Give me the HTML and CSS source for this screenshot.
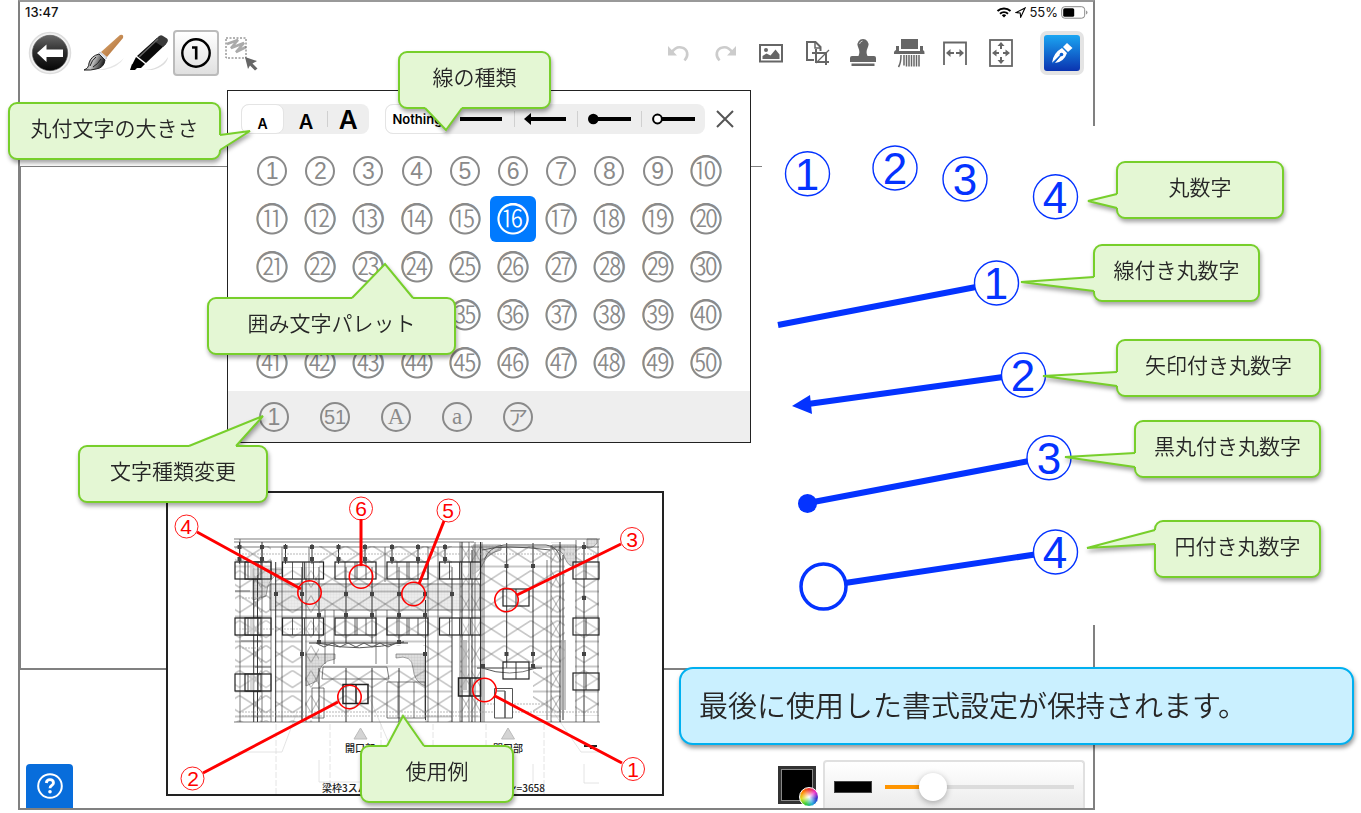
FILE: index.html
```html
<!DOCTYPE html>
<html lang="ja">
<head>
<meta charset="utf-8">
<meta name="viewport" content="width=device-width, initial-scale=1">
<title>丸付文字の使い方</title>
<link rel="stylesheet" href="styles.css">
</head>
<body>
<main class="stage">
  <section class="app" aria-label="アプリ画面">
    <header class="status">
      <span>13:47</span>
      <span class="status-right">
        <svg width="16" height="12" viewBox="0 0 16 12" fill="none" stroke="#000" stroke-width="2"><path d="M1.500 5a9.500 9.500 0 0 1 13 0M4 7.700a6 6 0 0 1 8 0"/><path d="M8 11.500L5.800 9.300a3.200 3.200 0 0 1 4.400 0z" fill="#000" stroke="none"/></svg>
        <svg width="11" height="11" viewBox="0 0 11 11" fill="none" stroke="#000" stroke-width="1.100"><path d="M10 1L1 5.600l4.200.4.500 4.200z"/></svg>
        <span class="percent">55%</span>
        <svg width="27" height="13" viewBox="0 0 27 13"><rect x=".7" y=".7" width="23" height="11.500" rx="3" fill="none" stroke="#888"/><rect x="2.200" y="2.200" width="11" height="8.500" rx="1.500"/><path d="M25 4.500v4q1.500-.5 1.500-2t-1.500-2z" fill="#999"/></svg>
      </span>
    </header>

    <nav class="toolbar" aria-label="ツール">
      <button class="back" aria-label="戻る">
        <svg width="44" height="44" viewBox="0 0 44 44"><defs><linearGradient id="bk" x2="0" y2="1"><stop stop-color="#666"/><stop offset=".5" stop-color="#2a2a2a"/><stop offset="1" stop-color="#050505"/></linearGradient></defs><circle cx="22" cy="22" r="20.500" fill="#f2f2f2" stroke="#ddd" stroke-width="1.500"/><circle cx="22" cy="22" r="17.700" fill="url(#bk)" stroke="#555" stroke-width=".6"/><path d="M9 22l9.500-8.500v5H35v7.500H18.500v5z" fill="#fff"/></svg>
      </button>
      <button aria-label="筆">
        <svg width="44" height="40" viewBox="0 0 44 40"><defs><linearGradient id="wd" x2="1" y2="1"><stop stop-color="#e0b27a"/><stop offset="1" stop-color="#a9622a"/></linearGradient><linearGradient id="br" x2="1" y2=".3"><stop stop-color="#555"/><stop offset=".5" stop-color="#ccc"/><stop offset="1" stop-color="#222"/></linearGradient></defs><path d="M10 37q20 0 32-12q-5 9-20 12z" fill="#e6e6e6"/><path d="M38 2q4-1 3 3L25 24l-6-5z" fill="url(#wd)"/><path d="M18 19l7 6-3 2-6-5z" fill="#dde3ea" stroke="#99a" stroke-width=".5"/><path d="M17 21l6 6q-1 8-9 9-5 1.500-12 1 5-2 5-7 2-7 10-9z" fill="url(#br)" stroke="#222"/><path d="M14 24q-4 3-6 9M19 26q-3 5-8 8" stroke="#222" fill="none"/></svg>
      </button>
      <button aria-label="マーカー">
        <svg width="44" height="40" viewBox="0 0 44 40"><path d="M14 37q18 0 26-13-1 9-16 13z" fill="#ddd"/><path d="M29 5l9 6L18 30l-9-7z" fill="#0a0a0a"/><path d="M29 5q3-4 6-2l4 2.500q2 2-.5 5L35 14l-9-6z" fill="#3a3a3a"/><path d="M8 24l9 7-4 4H8l-4-3z"/><path d="M30 6L11 24" stroke="#666" stroke-width="1.500"/><path d="M4 31l5 4-2 2H2z"/></svg>
      </button>
      <button class="tool-active" aria-label="丸付文字" aria-pressed="true">
        <svg width="34" height="34" viewBox="0 0 34 34" fill="none" stroke="#000"><circle cx="17" cy="17" r="13.700" stroke-width="2.400"/><path d="M13 11.500h4.200v12" stroke-width="2.600"/></svg>
      </button>
      <button aria-label="範囲選択">
        <svg width="36" height="38" viewBox="0 0 36 38"><path d="M3 10l11-4-7 8 13-5-8 9 10-5" fill="none" stroke="#aaa" stroke-width="2.600"/><rect x="2" y="4" width="20" height="20" fill="none" stroke="#666" stroke-dasharray="2 1.500"/><path d="M21 23l12 4-4.500 2.500 5 5-2.500 2-5-5-2 3.500z" fill="#666"/></svg>
      </button>
      <span class="spacer"></span>
      <button aria-label="元に戻す" disabled>
        <svg width="24" height="20" viewBox="0 0 24 20"><path d="M4.500 9.500Q9 3 14.500 4.500c6.500 1.500 7.500 8 3 13" fill="none" stroke="#ccc" stroke-width="2.600"/><path d="M1 3v9.500h9z" fill="#ccc"/></svg>
      </button>
      <button aria-label="やり直す" disabled>
        <svg width="24" height="20" viewBox="0 0 24 20"><path d="M19.500 9.500Q15 3 9.500 4.500C3 6 2 12.500 6.500 17.500" fill="none" stroke="#ccc" stroke-width="2.600"/><path d="M23 3v9.500h-9z" fill="#ccc"/></svg>
      </button>
      <button aria-label="画像">
        <svg width="26" height="20" viewBox="0 0 26 20"><rect x="2" y="2" width="22" height="16.500" fill="#fff" stroke="#666" stroke-width="2"/><circle cx="8" cy="7" r="2" fill="#666"/><path d="M4.500 16v-3l4-2.500 4 2 5-6 4 5v4.500z" fill="#666"/></svg>
      </button>
      <button aria-label="切り抜き">
        <svg width="26" height="28" viewBox="0 0 26 28" fill="none" stroke="#666"><path d="M10 21H3V3h8.500l5 5v4" stroke-width="2"/><path d="M11 3v6h6" stroke-width="1.500"/><path d="M12 10v13h13M8 14h14v12" stroke-width="2"/><path d="M12 24L25 11" stroke-width="1.200"/></svg>
      </button>
      <button aria-label="スタンプ">
        <svg width="28" height="30" viewBox="0 0 28 30" fill="#666"><path d="M14 1a5.500 5.500 0 0 1 5.300 7c-1.500 4-2.500 6-.8 10H25q2 0 2 2v4H1v-4q0-2 2-2h6.500c1.700-4 .7-6-.8-10A5.500 5.500 0 0 1 14 1zM2.500 25.500h23V28h-23z"/><path d="M10.500 6q.5-2.500 3-3" fill="none" stroke="#ccc"/></svg>
      </button>
      <button aria-label="シュレッダー">
        <svg width="32" height="30" viewBox="0 0 32 30" fill="#666"><path d="M8 1h17v10H8z"/><path d="M3 8h3v5h21V8h3v4q2 1 1.500 4H1q-.5-3 2-4z"/><path d="M8 17q0 8-2.500 12M11 17v10.500M13.500 17v11.500M16 17v11.500M18.500 17v11.500M21 17v11.500M23.500 17v11.500M26 17v11.500" fill="none" stroke="#666" stroke-width="1.500"/></svg>
      </button>
      <button aria-label="幅に合わせる">
        <svg width="26" height="26" viewBox="0 0 26 26"><path d="M2 25V2.500h22V25" fill="none" stroke="#666" stroke-width="1.800"/><path d="M4 13l4.500-4v3H12v2H8.500v3zM22 13l-4.500-4v3H14v2h3.500v3z" fill="#666"/></svg>
      </button>
      <button aria-label="全体表示">
        <svg width="26" height="30" viewBox="0 0 26 30"><rect x="2" y="2" width="22" height="26" fill="none" stroke="#666" stroke-width="1.800"/><path d="M4 15l4.500-3.500v2.500H11v2H8.500v2.500zM22 15l-4.500-3.500v2.500H15v2h2.500v2.500zM13 4l3.500 4H14v3h-2V8H9.500zM13 26l3.500-4H14v-3h-2v3H9.500z" fill="#666"/></svg>
      </button>
      <button class="pen" aria-label="ペン">
        <svg width="26" height="26" viewBox="0 0 26 26"><path d="M3 23Q4 13 13 8l5 5Q15 22 6 23l6-7.500" fill="#fff"/><path d="M3.500 23.500L12 15" stroke="#0a5fd0" stroke-width="1.400"/><circle cx="12.500" cy="14.500" r="1.800" fill="#0a5fd0"/><path d="M14 7l4-4 5.500 5-4.500 4z" fill="#fff"/></svg>
      </button>
    </nav>

    <div class="canvas"></div>

    <footer class="footer">
      <button class="help" aria-label="ヘルプ">
        <svg width="28" height="28" viewBox="0 0 28 28" fill="none" stroke="#fff"><circle cx="14" cy="14" r="11.800" stroke-width="2"/><path d="M10.300 11q.3-3.300 3.700-3.300T17.500 11c0 2.500-3.500 2.500-3.500 5.200" stroke-width="2.800"/><circle cx="14" cy="19.800" r="1.800" fill="#fff" stroke="none"/></svg>
      </button>
      <div class="footer-right">
        <button class="swatch" aria-label="色"><span class="wheel"></span></button>
        <label class="width-panel"><span class="line-preview"></span><input type="range" min="0" max="100" value="21" aria-label="線の太さ"></label>
      </div>
    </footer>
  </section>

  <section class="samples" aria-label="丸数字の例">
    <svg viewBox="762 126 338 499" width="338" height="499">
      <rect x="762" y="126" width="338" height="499" fill="#fff"/>
      <g class="blue-line">
        <path d="M778 325L976 287M808 404L1003 377M808 503L1029 461M845 583L1035 554.500"/>
      </g>
      <path d="M792 406l18-11 2 19z" fill="#0433ff"/>
      <circle cx="807.500" cy="503.500" r="9.500" fill="#0433ff"/>
      <circle cx="823.500" cy="586.500" r="22.500" fill="#fff" stroke="#0433ff" stroke-width="3.500"/>
      <g class="blue-ring">
        <circle cx="807.500" cy="173.700" r="22"/><circle cx="895" cy="168" r="22"/><circle cx="965" cy="179" r="22"/><circle cx="1055.500" cy="196.700" r="22"/><circle cx="996.500" cy="283" r="22"/><circle cx="1023.500" cy="375" r="22"/><circle cx="1049" cy="457.700" r="22"/><circle cx="1055.500" cy="552" r="22"/>
      </g>
      <g class="blue-digit">
        <text x="807" y="190">1</text><text x="895" y="184">2</text><text x="965" y="195">3</text><text x="1055" y="213">4</text><text x="996" y="299">1</text><text x="1023" y="391">2</text><text x="1049" y="474">3</text><text x="1055" y="568">4</text>
      </g>
    </svg>
  </section>

  <section class="palette" aria-label="囲み文字パレット">
    <div class="palette-head">
      <div class="seg sizes" role="group" aria-label="文字の大きさ">
        <button class="seg-on a-small">A</button><button class="a-mid">A</button><button class="a-big">A</button>
      </div>
      <div class="seg lines" role="group" aria-label="線の種類">
        <button class="seg-on nothing">Nothing</button>
        <button aria-label="線"><svg width="44" height="14" viewBox="0 0 44 14"><path d="M0 7h42" stroke="#000" stroke-width="4"/></svg></button>
        <button aria-label="矢印"><svg width="44" height="14" viewBox="0 0 44 14"><path d="M5 7h37" stroke="#000" stroke-width="4"/><path d="M0 7l7-6v12z"/></svg></button>
        <button aria-label="黒丸"><svg width="44" height="14" viewBox="0 0 44 14"><path d="M5 7h38" stroke="#000" stroke-width="4"/><circle cx="5.300" cy="7" r="5.300"/></svg></button>
        <button aria-label="円"><svg width="44" height="14" viewBox="0 0 44 14"><path d="M9 7h34" stroke="#000" stroke-width="4"/><circle cx="5.500" cy="7" r="4.400" fill="#fff" stroke="#000" stroke-width="2"/></svg></button>
      </div>
      <button class="close" aria-label="閉じる"><svg width="20" height="20" viewBox="0 0 20 20"><path d="M2 2l16 16M18 2L2 18" stroke="#555" stroke-width="2"/></svg></button>
    </div>
    <div class="grid">
      <button><i>1</i></button><button><i>2</i></button><button><i>3</i></button><button><i>4</i></button><button><i>5</i></button><button><i>6</i></button><button><i>7</i></button><button><i>8</i></button><button><i>9</i></button><button class="g">⑩</button>
      <button class="g">⑪</button><button class="g">⑫</button><button class="g">⑬</button><button class="g">⑭</button><button class="g">⑮</button><button class="g chosen">⑯</button><button class="g">⑰</button><button class="g">⑱</button><button class="g">⑲</button><button class="g">⑳</button>
      <button class="g">㉑</button><button class="g">㉒</button><button class="g">㉓</button><button class="g">㉔</button><button class="g">㉕</button><button class="g">㉖</button><button class="g">㉗</button><button class="g">㉘</button><button class="g">㉙</button><button class="g">㉚</button>
      <button aria-label="31"></button><button aria-label="32"></button><button aria-label="33"></button><button aria-label="34"></button><button class="g">㉟</button><button class="g">㊱</button><button class="g">㊲</button><button class="g">㊳</button><button class="g">㊴</button><button class="g">㊵</button>
      <button class="g">㊶</button><button class="g">㊷</button><button class="g">㊸</button><button class="g">㊹</button><button class="g">㊺</button><button class="g">㊻</button><button class="g">㊼</button><button class="g">㊽</button><button class="g">㊾</button><button class="g">㊿</button>
    </div>
    <div class="kinds">
      <button><i>1</i></button><button><i class="n">51</i></button><button><i class="serif">A</i></button><button><i class="serif">a</i></button><button><i class="kana">ア</i></button>
    </div>
  </section>

  <figure class="example" aria-label="使用例の図面">
    <svg viewBox="168 493 494 301" width="494" height="301">
      <defs>
        <pattern id="brace" x="319" y="545.500" width="26.500" height="25" patternUnits="userSpaceOnUse"><path d="M0 0L26.500 17M26.500 0L0 17M0 21H26.500" fill="none" stroke="#222" stroke-width=".5"/></pattern>
        <pattern id="thin" x="271" y="545.500" width="10" height="25" patternUnits="userSpaceOnUse"><path d="M0 0L10 17M10 0L0 17M0 21H10" fill="none" stroke="#555" stroke-width=".5"/></pattern>
        <pattern id="mesh" width="3" height="3" patternUnits="userSpaceOnUse"><rect width="3" height="3" fill="#ddd"/><path d="M0 0H3M0 0V3" stroke="#bbb" stroke-width=".5"/></pattern>
        <g id="win"><rect width="41" height="17" fill="#fff" fill-opacity=".2" stroke="#222" stroke-width="1.200"/><path d="M10 0v17M20 0v17M22 0v17M31 0v17" stroke="#333" stroke-width=".8"/></g>
        <g id="half"><rect width="26" height="17" fill="#fff" fill-opacity=".2" stroke="#222" stroke-width="1.200"/><path d="M13 0v17" stroke="#333"/></g>
      </defs>
      <g fill="none" stroke="#ddd" stroke-width=".8"><path d="M276 724v70M330 724v70M381 724v70M433 724v70M486 724v70M544 724v70" stroke-dasharray="6 2"/><path d="M238 752h44l15-40M366 690l26 60M545 700l36 52h18M319 760v22h60M533 764v19M584 764v19h15"/></g>
      <path d="M270 584h210v26H270z" fill="url(#mesh)" fill-opacity=".6" stroke="#777"/>
      <path d="M253 569h29v4q-14 2-16 23l-13 4zM306 654h29v5q-17 2-18 22l-11 5zM396 654h29v32q-11-4-12-18t-17-10zM473 545h28v5q-13 3-17 12t-11 12zM552 545h24v22q-8 0-11-9t-13-9zM587 539h10v4q-3 5-10 5z" fill="url(#mesh)" stroke="#777" stroke-width=".7"/>
      <path d="M235 546h36v176h-36zM275 567h27v155h-27zM319 546h53v100h-53zM372 546h53v100h-53zM425 546h27v176h-27zM319 664h106v50H319zM481 546h84v117h-84zM533 664h27v52h-27zM575 546h24v170h-24z" fill="url(#brace)"/>
      <path d="M253 567h9v155h-9zM305 567h14v155h-14zM460 542h9v180h-9zM471 542h10v180h-10zM551 542h10v180h-10z" fill="url(#thin)"/>
      <g fill="none" stroke="#444" stroke-width=".7">
        <path d="M234 539h366M234 542h240M234 547h365M234 722h366M240 539v183M262 547v175M271 560v162M282 547v175M302 567v155M306 567v155M325 610v54M334 610v54M376 610v54M387 610v54M428 547v175M438 547v175M460 542v180M469 542v180M482 542v180M484 560v162M547 560v160M551 545v177M576 540v182M598 539v183M309 547v35M385 547v35M475 542v180"/>
        <path d="M323 667h64l2 12h-67zM312 688h12v30h-12zM387 682h38v36h-38zM398 682v36M414 682v36M250 591h-15M261 641h-20M271 667h-16M261 691h-15"/>
      </g>
      <g fill="none" stroke="#333">
        <path d="M239.500 542v22M253.700 568v154M257.500 575v147M262 542v25M275.700 562v160M285.500 544v20M302 567v155M312 544v20M319 567v76M338.500 544v20M346 567v76M365 544v20M372 567v76M392 544v20M399 567v76M418 544v20M445 544v20M425.500 600v120M319 668v54M346 668v54M372 668v54M399 668v54M452 567v155M462 542v180M480.500 542v180M506.700 543v125M533 543v125M560 542v180M563 555v165M584 542v180M472 550v172"/>
        <path d="M309 643h99M477 668h65"/>
      </g>
      <path d="M318 643q40 10 86-1l-8 1-8 4-8-4-8 4-8-4-8 4-8-4-8 4-8-4-8 4-8-4M482 668q28 10 54 0M482 550q22-6 68 0M484 560q6-14 20-15h42q12 1 15 15" fill="none" stroke="#555"/>
      <path d="M239 648h21M239 598h21M239 712h360M239 629h87M239 554h355M484 704h60M239 716h240" fill="none" stroke="#999" stroke-width=".7" stroke-dasharray="2 1"/>
      <g fill="#444"><path d="M237.500 545h4v4h-4zM237.500 557h4v4h-4zM260 545h4v4h-4zM260 557h4v4h-4zM283.500 545h4v4h-4zM283.500 557h4v4h-4zM310 545h4v4h-4zM310 557h4v4h-4zM336.500 545h4v4h-4zM336.500 557h4v4h-4zM363 545h4v4h-4zM363 557h4v4h-4zM390 545h4v4h-4zM390 557h4v4h-4zM416 545h4v4h-4zM416 557h4v4h-4zM443 545h4v4h-4zM443 557h4v4h-4zM274 592h4v4h-4zM300 592h4v4h-4zM344 592h4v4h-4zM370 592h4v4h-4zM397 592h4v4h-4zM423 592h4v4h-4zM450 592h4v4h-4zM317 613h4v4h-4zM344 613h4v4h-4zM370 613h4v4h-4zM397 613h4v4h-4zM423 613h4v4h-4zM317 640h4v4h-4zM397 640h4v4h-4zM300 652h4v4h-4zM423 652h4v4h-4zM504.500 564h4v4h-4zM531 564h4v4h-4zM504.500 652h4v4h-4zM531 652h4v4h-4zM531 664h4v4h-4zM481 664h4v4h-4zM582 545h4v4h-4zM582 596h4v4h-4zM582 652h4v4h-4z"/></g>
      <path d="M250 562h4v16h-4zM250 618h4v16h-4zM250 674h4v16h-4zM303 562h4v16h-4zM459 562h4v16h-4zM470 562h6v16h-6zM459 618h4v16h-4zM561 640h5v70h-5zM462 640h5v50h-5z" fill="#aaa" fill-opacity=".7"/>
      <use href="#half" x="235" y="562"/><use href="#half" x="245" y="562"/><use href="#half" x="235" y="618"/><use href="#half" x="245" y="618"/><use href="#half" x="235" y="674"/><use href="#half" x="245" y="674"/>
      <use href="#win" x="282.500" y="562"/><use href="#win" x="335" y="562"/><use href="#win" x="387" y="562"/><use href="#win" x="439.500" y="562"/>
      <use href="#win" x="282.500" y="618"/><use href="#win" x="335" y="618"/><use href="#win" x="387" y="618"/><use href="#win" x="439.500" y="618"/>
      <use href="#half" x="573" y="562"/><use href="#half" x="573" y="618"/><use href="#half" x="573" y="673"/><use href="#half" x="503" y="589"/><use href="#half" x="503" y="662"/>
      <path d="M458.500 678h22v18h-22zM470 678v18M343 684.500h25v19h-25zM356 684v20" fill="none" stroke="#222" stroke-width="1.500"/>
      <path d="M494.500 688.500h18v29.500h-18zM497 691h8v27M505 691v27" fill="#fff" stroke="#555"/>
      <path d="M360.500 728l6.500 11h-13zM508 728l6.500 11h-13z" fill="#d4d4d4" stroke="#bbb"/>
      <g class="plan-text"><text x="345" y="752">開口部</text><text x="493" y="752">開口部</text><text x="322" y="792">梁枠3スパン</text><text x="545" y="792" text-anchor="end">スパン=3658</text></g>
      <path d="M584 746h5M592 746h5M591 745v4M587 745v2" stroke="#222" stroke-width="2"/>
      <g fill="none" stroke="#f00"><path d="M197 532l104 57M361 519v47M444 521l-25 63M621 544l-104 51M203 773l135-71M495 696l127 67" stroke-width="3"/><g stroke-width="1.600"><circle cx="309.500" cy="592.500" r="11.700"/><circle cx="361" cy="576.500" r="11.700"/><circle cx="413.500" cy="594" r="11.700"/><circle cx="506.500" cy="600" r="11.700"/><circle cx="349.500" cy="697" r="11.700"/><circle cx="484.500" cy="690" r="11.700"/></g>
      <g stroke-width=".9"><circle cx="186.500" cy="526.500" r="11.500"/><circle cx="361" cy="508.500" r="11.500"/><circle cx="448.500" cy="510.500" r="11.500"/><circle cx="632" cy="539" r="11.500"/><circle cx="192.500" cy="778.500" r="11.500"/><circle cx="633" cy="769" r="11.500"/></g></g>
      <g class="red-digit"><text x="186" y="534">4</text><text x="361" y="516">6</text><text x="448" y="518">5</text><text x="632" y="547">3</text><text x="193" y="786">2</text><text x="633" y="777">1</text></g>
    </svg>
  </figure>

  <div class="callout c-size">丸付文字の大きさ<svg><path class="f" d="M212 33L242 29L212 48L206 48V33z"/><path class="s" d="M212 33L242 29L212 48"/></svg></div>
  <div class="callout c-line">線の種類<svg><path class="f" d="M27 57L48 79L64 57V52H27z"/><path class="s" d="M27 57L48 79L64 57"/></svg></div>
  <div class="callout c-palette">囲み文字パレット<svg><path class="f" d="M145 1L178 -33L206 1V6H145z"/><path class="s" d="M145 1L178 -33L206 1"/></svg></div>
  <div class="callout c-kind">文字種類変更<svg><path class="f" d="M111 1L185 -29L158 1V6H111z"/><path class="s" d="M111 1L185 -29L158 1"/></svg></div>
  <div class="callout c-example">使用例<svg><path class="f" d="M27 1L43 -29L64 1V6H27z"/><path class="s" d="M27 1L43 -29L64 1"/></svg></div>
  <div class="callout c-num">丸数字<svg><path class="f" d="M1 33L-28 40L1 47H6V33z"/><path class="s" d="M1 33L-28 40L1 47"/></svg></div>
  <div class="callout c-numline">線付き丸数字<svg><path class="f" d="M1 33L-72 38L1 47H6V33z"/><path class="s" d="M1 33L-72 38L1 47"/></svg></div>
  <div class="callout c-numarrow">矢印付き丸数字<svg><path class="f" d="M1 33L-73 37L1 47H6V33z"/><path class="s" d="M1 33L-73 37L1 47"/></svg></div>
  <div class="callout c-numdot">黒丸付き丸数字<svg><path class="f" d="M1 33L-69 37L1 47H6V33z"/><path class="s" d="M1 33L-69 37L1 47"/></svg></div>
  <div class="callout c-numring">円付き丸数字<svg><path class="f" d="M1 10L-67 28L1 24H6V10z"/><path class="s" d="M1 10L-67 28L1 24"/></svg></div>
  <p class="note">最後に使用した書式設定が保持されます。</p>
</main>
</body>
</html>
```

FILE: styles.css
```css
* { box-sizing: border-box; }
body { margin: 0; background: #fff; color: #262626; font-family: "Noto Sans CJK JP", sans-serif; }
button { appearance: none; border: 0; padding: 0; background: none; font: inherit; color: inherit; display: flex; align-items: center; justify-content: center; }
svg { display: block; flex: none; }

.stage { position: relative; min-height: 100vh; }

/* Application window */
.app { display: flex; flex-direction: column; margin: 0 266px 0 18px; border: 2px solid #808080; border-top-color: #999; }
.status { display: flex; justify-content: space-between; align-items: center; height: 20px; padding: 0 5px; color: #111; font: 500 13px/20px Inter, sans-serif; }
.status-right { display: flex; align-items: center; gap: 3px; }
.percent { font-weight: 400; }
.toolbar { display: flex; align-items: flex-start; height: 144px; padding: 8px 9px 0 8px; }
.toolbar button { width: 46px; height: 46px; }
.toolbar .back { width: 44px; margin-right: 9px; }
.toolbar .tool-active { border: 2px solid #bbb; border-radius: 4px; background: linear-gradient(#fff, #e0e0e0); }
.toolbar .pen { width: 44px; height: 44px; margin: 1px 0 0 16px; border: 4px solid #e4e4e4; border-radius: 7px; background: linear-gradient(#1ba6f2, #0a33b0); }
.spacer { flex: 1; }
.canvas { height: 504px; border: solid #808080; border-width: 1px 0 2px 1px; }
.footer { display: flex; justify-content: space-between; align-items: flex-end; height: 138px; padding: 0 8px 0 6px; }
.help { width: 47px; height: 44px; border-radius: 4px 4px 0 0; background: #086ddb; }
.footer-right { display: flex; align-items: flex-end; gap: 7px; }
.swatch { position: relative; width: 38px; height: 38px; margin-bottom: 4px; border: 2px solid #333; background: #000; box-shadow: inset 0 0 0 1px #333, inset 0 0 0 2px #888; }
.wheel { position: absolute; right: -5px; bottom: -5px; width: 20px; height: 20px; border: 1px solid #fff; border-radius: 50%; background: radial-gradient(#fff, transparent 60%), conic-gradient(#e33, #e3c, #33c, #2ad, #3c3, #dd2, #f80, #e33); }
.width-panel { display: flex; align-items: center; gap: 13px; width: 262px; height: 48px; padding: 3px 9px 0; border: 2px solid #e0e0e0; border-bottom: 0; border-radius: 4px 4px 0 0; background: linear-gradient(#fff, #ececec); }
.line-preview { width: 38px; height: 12px; border: 1px solid #444; background: #000; }
input[type="range"] { appearance: none; flex: 1; min-width: 0; height: 28px; margin: 0; background: linear-gradient(90deg, #ff9500 25%, #dcdcdc 25%) center / 100% 4px no-repeat; }
input[type="range"]::-webkit-slider-thumb { appearance: none; width: 28px; height: 28px; border-radius: 50%; background: #fff; box-shadow: 0 2px 6px rgba(0, 0, 0, .3); }

/* Symbol palette */
.palette { position: absolute; left: 227px; top: 90px; width: 524px; border: 1px solid #222; background: #fff; color: #8a8a8a; }
.palette-head { display: flex; align-items: center; padding: 13px 5px 6px 13px; }
.seg { display: flex; height: 30px; border-radius: 8px; background: #eee; color: #000; font-family: Inter, sans-serif; font-weight: 600; }
.seg button { flex: 1 0 0; min-width: 0; }
.seg button + button { border-left: 1px solid; border-image: linear-gradient(transparent 25%, #d0d0d0 25% 75%, transparent 75%) 1; }
.seg .seg-on + button { border-image: linear-gradient(transparent, transparent) 1; }
.seg .seg-on { border: 1px solid #e4e4e4; border-radius: 8px; background: #fff; }
.sizes { width: 128px; margin-right: 16px; }
.sizes button { align-items: flex-end; }
.a-small { font-size: 14px; line-height: 18px; }
.a-mid { font-size: 20px; line-height: 24px; }
.a-big { font-size: 26px; line-height: 28px; }
.lines { flex: 1; }
.lines .nothing { font-size: 13px; }
.close { width: 40px; height: 30px; }
.palette .grid { display: grid; grid-template-columns: repeat(10, 1fr); row-gap: 2px; padding: 8px 20px 5px; }
.grid button { width: 46px; height: 46px; justify-self: center; border-radius: 6px; }
.palette .g { padding-bottom: 4px; background-image: radial-gradient(circle at center, transparent 13px, currentColor 14px 15px, transparent 16px); font: 300 33px/42px "Noto Sans CJK JP", sans-serif; }
.palette i { display: flex; align-items: center; justify-content: center; width: 30px; height: 30px; border: 2px solid currentColor; border-radius: 50%; font: 23px/26px "Liberation Sans", sans-serif; }
.palette .n { font-size: 20px; }
.palette .serif { font-family: "Liberation Serif", serif; }
.palette .kana { font: 20px/26px "Noto Sans CJK JP", sans-serif; }
.grid .chosen { background-color: #007aff; color: #fff; }
.kinds { display: flex; gap: 31px; padding: 10px 31px; background: #eee; }
.kinds button { height: 31px; }

/* Example drawing and coloured samples */
.example { position: absolute; left: 166px; top: 491px; margin: 0; border: 2px solid #222; background: #fff; }
.plan-text { font: 500 10px "Noto Sans CJK JP", sans-serif; fill: #222; }
.red-digit { font: 21px "Liberation Sans", sans-serif; fill: #f00; text-anchor: middle; }
.samples { position: absolute; left: 762px; top: 126px; }
.blue-line { fill: none; stroke: #0433ff; stroke-width: 6px; }
.blue-ring { fill: #fff; stroke: #0433ff; stroke-width: 1.4px; }
.blue-digit { font: 44px "Liberation Sans", sans-serif; fill: #0433ff; text-anchor: middle; }

/* Explanations */
.callout { position: absolute; display: flex; align-items: center; justify-content: center; height: 58px; padding-bottom: 8px; border: 2px solid #77cf2b; border-radius: 9px; background: #e4f7d4; font-weight: 350; font-size: 21px; line-height: 30px; white-space: nowrap; filter: drop-shadow(1px 3px 2px rgba(0, 0, 0, .35)); }
.callout svg { position: absolute; left: -2px; top: -2px; width: 1px; height: 1px; overflow: visible; }
.f { fill: #e4f7d4; }
.s { fill: none; stroke: #77cf2b; stroke-width: 2px; }
.c-size { left: 8px; top: 102px; width: 213px; }
.c-line { left: 398px; top: 51px; width: 153px; }
.c-palette { left: 207px; top: 297px; width: 249px; }
.c-kind { left: 78px; top: 445px; width: 190px; }
.c-example { left: 360px; top: 745px; width: 154px; }
.c-num { left: 1116px; top: 161px; width: 168px; }
.c-numline { left: 1093px; top: 244px; width: 167px; }
.c-numarrow { left: 1116px; top: 339px; width: 205px; }
.c-numdot { left: 1134px; top: 420px; width: 187px; }
.c-numring { left: 1154px; top: 520px; width: 167px; }
.note { position: absolute; left: 679px; right: 7px; top: 667px; margin: 0; padding: 16px 18px 20px; border: 2px solid #00b0f0; border-radius: 14px; background: #caf0ff; font-weight: 350; font-size: 29px; line-height: 38px; filter: drop-shadow(1px 3px 2px rgba(0, 0, 0, .4)); }
```
